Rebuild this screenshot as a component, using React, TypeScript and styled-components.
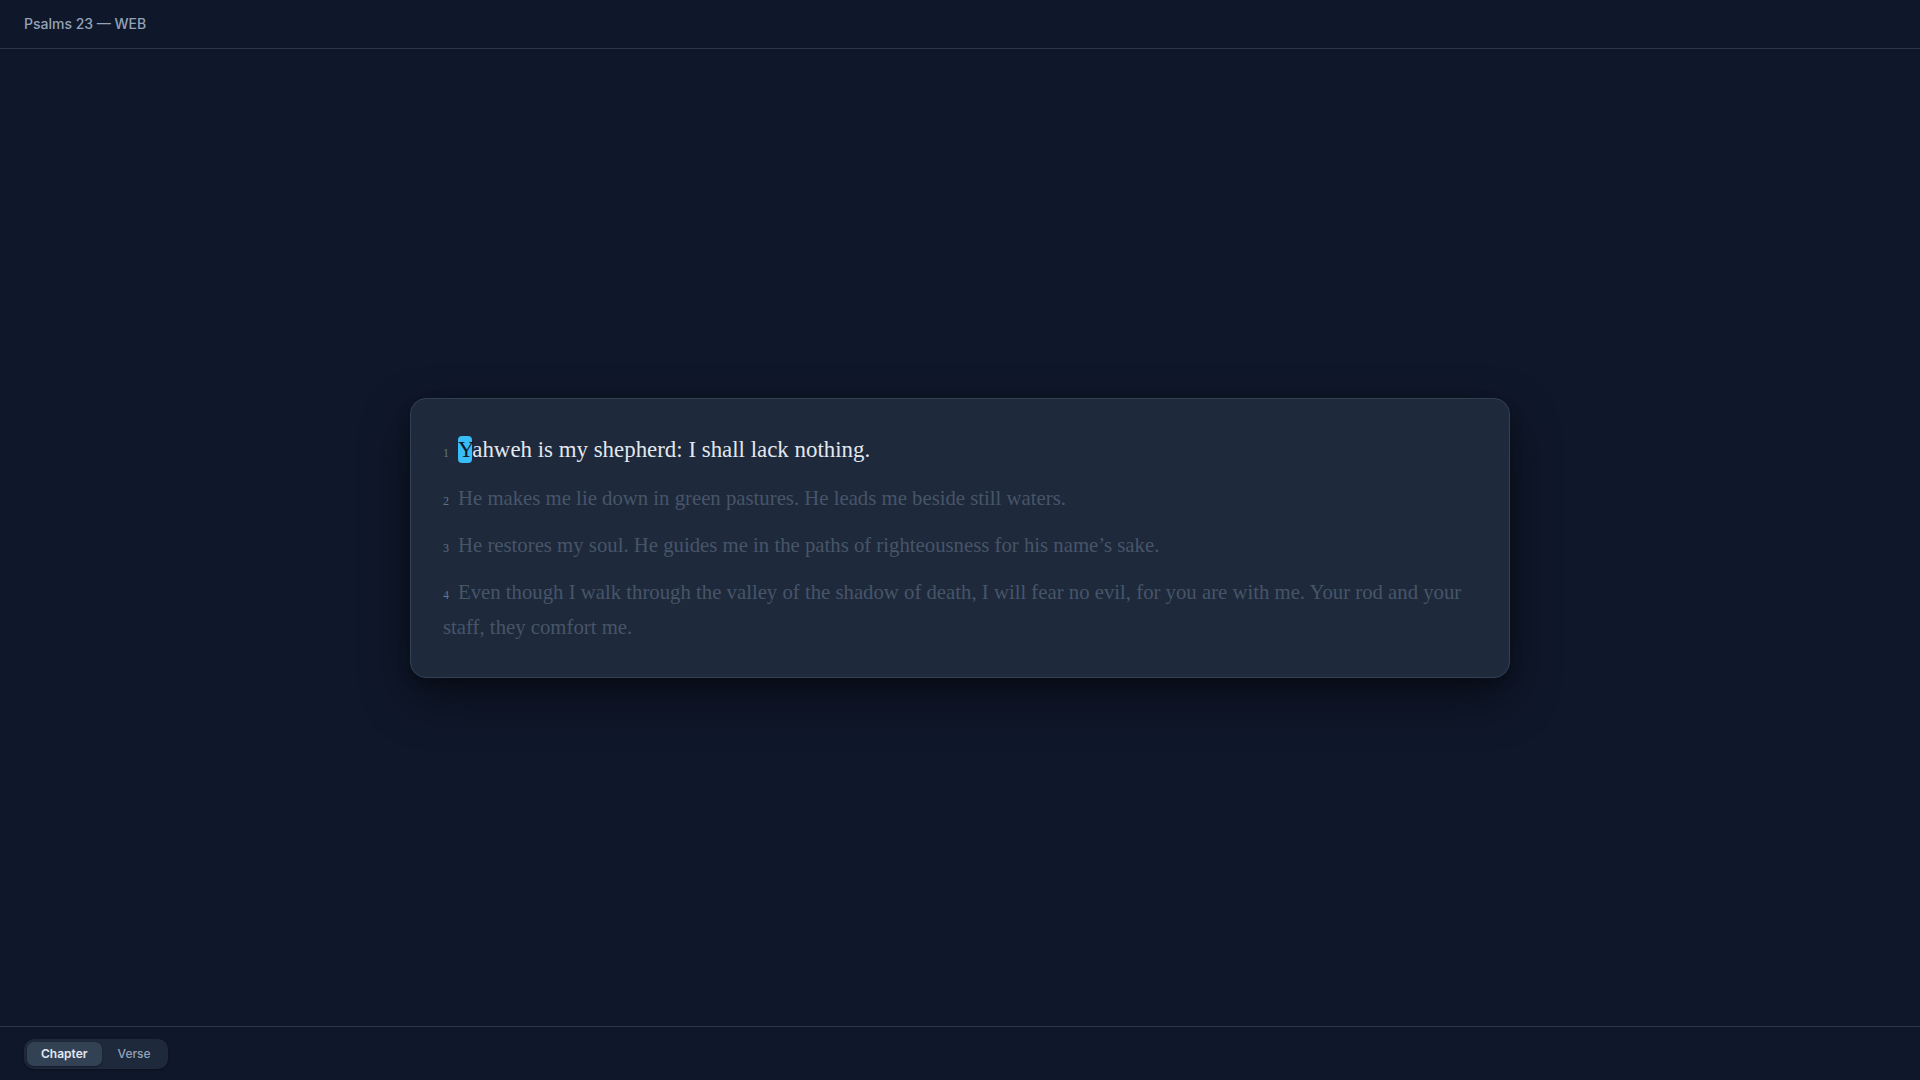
import React from "react";
import styled, { createGlobalStyle } from "styled-components";

const GlobalStyle = createGlobalStyle`
  html, body { margin: 0; padding: 0; background: #0f172a; }
  body { font-family: Inter, "Liberation Sans", sans-serif; }
  * { box-sizing: border-box; }
`;

const Page = styled.div`
  display: flex;
  flex-direction: column;
  height: 100vh;
  width: 100vw;
  background: #0f172a;
  overflow: hidden;
`;

const Header = styled.header`
  height: 49px;
  flex: 0 0 auto;
  display: flex;
  align-items: center;
  padding: 0 24px;
  border-bottom: 1px solid #2a3649;
`;

const Title = styled.div`
  font-family: Inter, "Liberation Sans", sans-serif;
  font-size: 14px;
  font-weight: 500;
  color: #94a3b8;
  padding-bottom: 1px;
`;

const Main = styled.main`
  flex: 1 1 auto;
  display: flex;
  align-items: center;
  justify-content: center;
`;

const Card = styled.section`
  width: 1100px;
  background: #1e293b;
  border: 1px solid #334155;
  border-radius: 16px;
  padding: 32px;
  box-shadow: 0 20px 50px rgba(0, 0, 0, 0.45), 0 4px 12px rgba(0, 0, 0, 0.25);
  display: flex;
  flex-direction: column;
  gap: 12px;
`;

const Verse = styled.p<{ $active?: boolean }>`
  margin: 0;
  font-family: "Liberation Serif", "DejaVu Serif", serif;
  font-size: ${(p) => (p.$active ? "22.9px" : "20.75px")};
  line-height: ${(p) => (p.$active ? "38px" : "35px")};
  color: ${(p) => (p.$active ? "#e2e8f0" : "#475569")};
`;

const Num = styled.span`
  font-family: "Liberation Serif", "DejaVu Serif", serif;
  font-size: 12px;
  line-height: 1;
  color: #64748b;
  margin-right: 9px;
`;

const Cursor = styled.span`
  background: #38bdf8;
  color: #0f172a;
  border-radius: 4px;
  padding: 1px 0;
`;

const Footer = styled.footer`
  height: 54px;
  flex: 0 0 auto;
  display: flex;
  align-items: center;
  padding: 0 24px;
  border-top: 1px solid #2a3649;
`;

const Segmented = styled.div`
  display: flex;
  align-items: center;
  gap: 2px;
  padding: 3px;
  background: #1e293b;
  border-radius: 10px;
  box-shadow: 0 1px 3px rgba(0, 0, 0, 0.3);
`;

const SegButton = styled.button<{ $active?: boolean }>`
  appearance: none;
  border: none;
  height: 24px;
  padding: 0 14px;
  border-radius: 7px;
  font-family: Inter, "Liberation Sans", sans-serif;
  font-size: 12px;
  font-weight: ${(p) => (p.$active ? 600 : 500)};
  color: ${(p) => (p.$active ? "#e2e8f0" : "#94a3b8")};
  background: ${(p) => (p.$active ? "#334155" : "transparent")};
  box-shadow: ${(p) => (p.$active ? "0 1px 2px rgba(0,0,0,0.35)" : "none")};
  cursor: pointer;
`;

const verses = [
  "He makes me lie down in green pastures. He leads me beside still waters.",
  "He restores my soul. He guides me in the paths of righteousness for his name\u2019s sake.",
  "Even though I walk through the valley of the shadow of death, I will fear no evil, for you are with me. Your rod and your staff, they comfort me.",
];

export default function App() {
  return (
    <>
      <GlobalStyle />
      <Page>
        <Header>
          <Title>Psalms 23 — WEB</Title>
        </Header>
        <Main>
          <Card>
            <Verse $active>
              <Num>1</Num>
              <Cursor>Y</Cursor>ahweh is my shepherd: I shall lack nothing.
            </Verse>
            {verses.map((v, i) => (
              <Verse key={i}>
                <Num>{i + 2}</Num>
                {v}
              </Verse>
            ))}
          </Card>
        </Main>
        <Footer>
          <Segmented>
            <SegButton $active>Chapter</SegButton>
            <SegButton>Verse</SegButton>
          </Segmented>
        </Footer>
      </Page>
    </>
  );
}
